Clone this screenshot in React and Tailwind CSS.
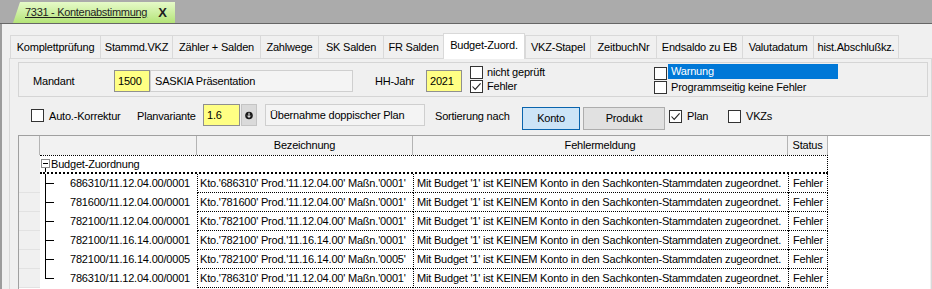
import React from "react";

const CB = ({ checked }) => (
  <div className="w-[13px] h-[13px] border border-[#333333] bg-white flex items-center justify-center shrink-0">
    {checked && (
      <svg width="11" height="11" viewBox="0 0 11 11">
        <path d="M1.5 5.5 L4.2 8.4 L9.6 2.4" fill="none" stroke="#222" strokeWidth="1.1" />
      </svg>
    )}
  </div>
);

const tabs = [
  ["Komplettprüfung", 90],
  ["Stammd.VKZ", 72],
  ["Zähler + Salden", 88],
  ["Zahlwege", 58],
  ["SK Salden", 65],
  ["FR Salden", 60],
  ["Budget-Zuord.", 82, true],
  ["VKZ-Stapel", 65],
  ["ZeitbuchNr", 66],
  ["Endsaldo zu EB", 86],
  ["Valutadatum", 71],
  ["hist.Abschlußkz.", 86],
];

const rows = [
  ["686310/11.12.04.00/0001", "Kto.'686310' Prod.'11.12.04.00' Maßn.'0001'"],
  ["781600/11.12.04.00/0001", "Kto.'781600' Prod.'11.12.04.00' Maßn.'0001'"],
  ["782100/11.12.04.00/0001", "Kto.'782100' Prod.'11.12.04.00' Maßn.'0001'"],
  ["782100/11.16.14.00/0001", "Kto.'782100' Prod.'11.16.14.00' Maßn.'0001'"],
  ["782100/11.16.14.00/0005", "Kto.'782100' Prod.'11.16.14.00' Maßn.'0005'"],
  ["786310/11.12.04.00/0001", "Kto.'786310' Prod.'11.12.04.00' Maßn.'0001'"],
];

const msg = "Mit Budget '1' ist KEINEM Konto in den Sachkonten-Stammdaten zugeordnet.";

export default function App() {
  return (
    <div className="w-[932px] h-[289px] overflow-hidden flex flex-col bg-[#f0f0f0] text-black font-['Liberation_Sans',Arial,sans-serif] text-[11px] tracking-[-0.2px] leading-none whitespace-nowrap">
      {/* top document tab bar */}
      <div className="h-[23px] bg-[#ababab] flex items-end pl-[13px] shrink-0">
        <div className="h-[21px] w-[162px] bg-gradient-to-b from-[#e6fac8] to-[#b4e477] [clip-path:polygon(7px_0,100%_0,100%_100%,0_100%)] flex items-center pl-[12px] text-[11px] text-[#1e1e1e] tracking-[-0.3px]">
          <span className="underline">7331 - Kontenabstimmung</span>
          <span className="ml-[11px] font-bold text-[13px]">X</span>
        </div>
      </div>
      <div className="h-px bg-[#666666] shrink-0" />

      {/* window body */}
      <div className="flex-1 min-h-0 flex flex-col border-l-2 border-[#9c9c9c] pl-[7px]">
        {/* tab strip */}
        <div className="mt-[9px] h-[25px] flex items-end pl-[1px] shrink-0">
          {tabs.map(([label, w, sel], i) =>
            sel ? (
              <div
                key={label}
                style={{ width: w }}
                className="h-[26px] -mb-px relative z-10 bg-white border-t border-l border-r border-[#d9d9d9] flex items-center justify-center pb-[2px]"
              >
                {label}
              </div>
            ) : (
              <div
                key={label}
                style={{ width: w }}
                className={
                  "h-[23px] bg-[#f0f0f0] border-t border-l border-[#d9d9d9] flex items-center justify-center" +
                  (i === tabs.length - 1 ? " border-r" : "")
                }
              >
                {label}
              </div>
            )
          )}
        </div>

        {/* tab page */}
        <div className="flex-1 min-h-0 flex flex-col border-t border-r border-l border-[#d9d9d9] bg-[#f0f0f0] pl-[8px] pr-[1px]">
          {/* Mandant group */}
          <div className="mt-[3px] h-[35px] w-[910px] border border-[#d5d5d5] flex items-start shrink-0">
            <div className="ml-[14px] w-[81px] h-[22px] mt-[7px] flex items-center">Mandant</div>
            <div className="mt-[7px] w-[36px] h-[22px] bg-[#ffff84] border border-[#8f8f8f] flex items-center pl-[3px]">
              1500
            </div>
            <div className="mt-[7px] w-[203px] h-[22px] bg-[#f4f4f4] border border-[#cfcfcf] flex items-center pl-[4px]">
              SASKIA Präsentation
            </div>
            <div className="ml-[22px] w-[51px] h-[22px] mt-[7px] flex items-center">HH-Jahr</div>
            <div className="mt-[7px] w-[36px] h-[22px] bg-[#ffff84] border border-[#8f8f8f] flex items-center pl-[3px]">
              2021
            </div>
            <div className="ml-[8px] w-[184px] mt-[3px] flex flex-col gap-[1px]">
              <div className="h-[13px] flex items-center gap-[4px]">
                <CB />
                <span>nicht geprüft</span>
              </div>
              <div className="h-[13px] flex items-center gap-[4px]">
                <CB checked />
                <span>Fehler</span>
              </div>
            </div>
            <div className="mt-[1px] flex flex-col gap-[1px]">
              <div className="h-[15px] flex items-center">
                <div className="mt-[4px]">
                  <CB />
                </div>
                <div className="ml-[1px] w-[170px] h-[15px] bg-[#0078d7] text-white flex items-center pl-[3px]">
                  Warnung
                </div>
              </div>
              <div className="h-[13px] mt-[1px] flex items-center gap-[4px]">
                <CB />
                <span>Programmseitig keine Fehler</span>
              </div>
            </div>
          </div>

          {/* second row */}
          <div className="mt-[6px] h-[28px] flex items-start shrink-0">
            <div className="ml-[13px] mt-[6px]">
              <CB />
            </div>
            <div className="ml-[5px] w-[88px] h-[26px] flex items-center">Auto.-Korrektur</div>
            <div className="w-[66px] h-[26px] flex items-center">Planvariante</div>
            <div className="mt-[1px] w-[37px] h-[22px] bg-[#ffff84] border border-[#8f8f8f] flex items-center pl-[3px]">
              1.6
            </div>
            <div className="mt-[1px] ml-[1px] w-[16px] h-[22px] bg-[#dadada] border border-[#c4c4c4] flex items-center justify-center">
              <svg width="8" height="9" viewBox="0 0 8 9">
                <circle cx="4" cy="4.5" r="3.8" fill="#1a1a1a" />
                <path d="M4 1.8 V6.2 M2.4 4.7 L4 6.4 L5.6 4.7" stroke="#fff" strokeWidth="1" fill="none" />
              </svg>
            </div>
            <div className="mt-[1px] ml-[8px] w-[160px] h-[22px] bg-[#f4f4f4] border border-[#cfcfcf] flex items-center pl-[4px]">
              Übernahme doppischer Plan
            </div>
            <div className="ml-[10px] w-[87px] h-[26px] flex items-center">Sortierung nach</div>
            <div className="mt-[4px] w-[58px] h-[23px] bg-[#cce4f7] border border-[#0a64ad] flex items-center justify-center">
              Konto
            </div>
            <div className="mt-[4px] ml-[3px] w-[82px] h-[23px] bg-[#e1e1e1] border border-[#adadad] flex items-center justify-center">
              Produkt
            </div>
            <div className="ml-[4px] mt-[7px]">
              <CB checked />
            </div>
            <div className="ml-[5px] w-[41px] h-[26px] flex items-center">Plan</div>
            <div className="mt-[7px]">
              <CB />
            </div>
            <div className="ml-[5px] h-[26px] flex items-center">VKZs</div>
          </div>

          {/* grid */}
          <div className="mt-[4px] flex-1 min-h-0 flex flex-col border-t border-l border-[#a0a0a0] bg-white">
            {/* header */}
            <div className="h-[19px] flex shrink-0">
              <div className="w-[21px] bg-[#f0f0f0] border-r border-[#b4b4b4]" />
              <div className="w-[157px] bg-[#f2f2f2] border-r border-[#b4b4b4]" />
              <div className="w-[216px] bg-[#f2f2f2] border-r border-[#b4b4b4] flex items-center justify-center">
                Bezeichnung
              </div>
              <div className="w-[375px] bg-[#f2f2f2] border-r border-[#b4b4b4] flex items-center justify-center">
                Fehlermeldung
              </div>
              <div className="w-[40px] bg-[#f2f2f2] border-r border-[#b4b4b4] flex items-center justify-center">
                Status
              </div>
              <div className="flex-1 bg-white" />
            </div>

            {/* group row */}
            <div className="h-[19px] flex shrink-0">
              <div className="w-[21px] bg-[#f0f0f0]" />
              <div className="w-[788px] border-t border-r border-b-2 border-dotted border-black flex items-stretch">
                <div className="ml-[1px] w-[9px] flex flex-col items-center">
                  <div className="mt-[3px] w-[9px] h-[9px] border border-[#8c8c8c] bg-white flex items-center justify-center">
                    <div className="w-[5px] h-px bg-black" />
                  </div>
                  <div className="flex-1 w-px bg-black" />
                </div>
                <span className="ml-[1px] self-center">Budget-Zuordnung</span>
              </div>
              <div className="flex-1 bg-white" />
            </div>

            {/* data rows */}
            {rows.map(([a, b], i) => (
              <div key={i} className="h-[19px] flex shrink-0">
                <div className="w-[21px] bg-[#f0f0f0] border-b border-[#e2e2e2]" />
                <div className="w-[157px] flex items-stretch">
                  <div className="ml-[5px] w-[9px] flex flex-col">
                    <div className="h-[10px] border-l border-b border-black" />
                    <div className={"flex-1" + (i < rows.length - 1 ? " border-l border-black" : "")} />
                  </div>
                  <div className="flex-1 pr-[7px] flex items-center justify-end">{a}</div>
                </div>
                <div className="w-[216px] border-l border-b border-dotted border-black flex items-center pl-[2px] overflow-hidden">
                  {b}
                </div>
                <div className="w-[375px] border-l border-b border-dotted border-black flex items-center pl-[3px] overflow-hidden">
                  {msg}
                </div>
                <div className="w-[40px] border-l border-r border-b border-dotted border-black flex items-center pl-[4px]">
                  Fehler
                </div>
                <div className="flex-1 bg-white" />
              </div>
            ))}
          </div>
        </div>
      </div>
    </div>
  );
}
